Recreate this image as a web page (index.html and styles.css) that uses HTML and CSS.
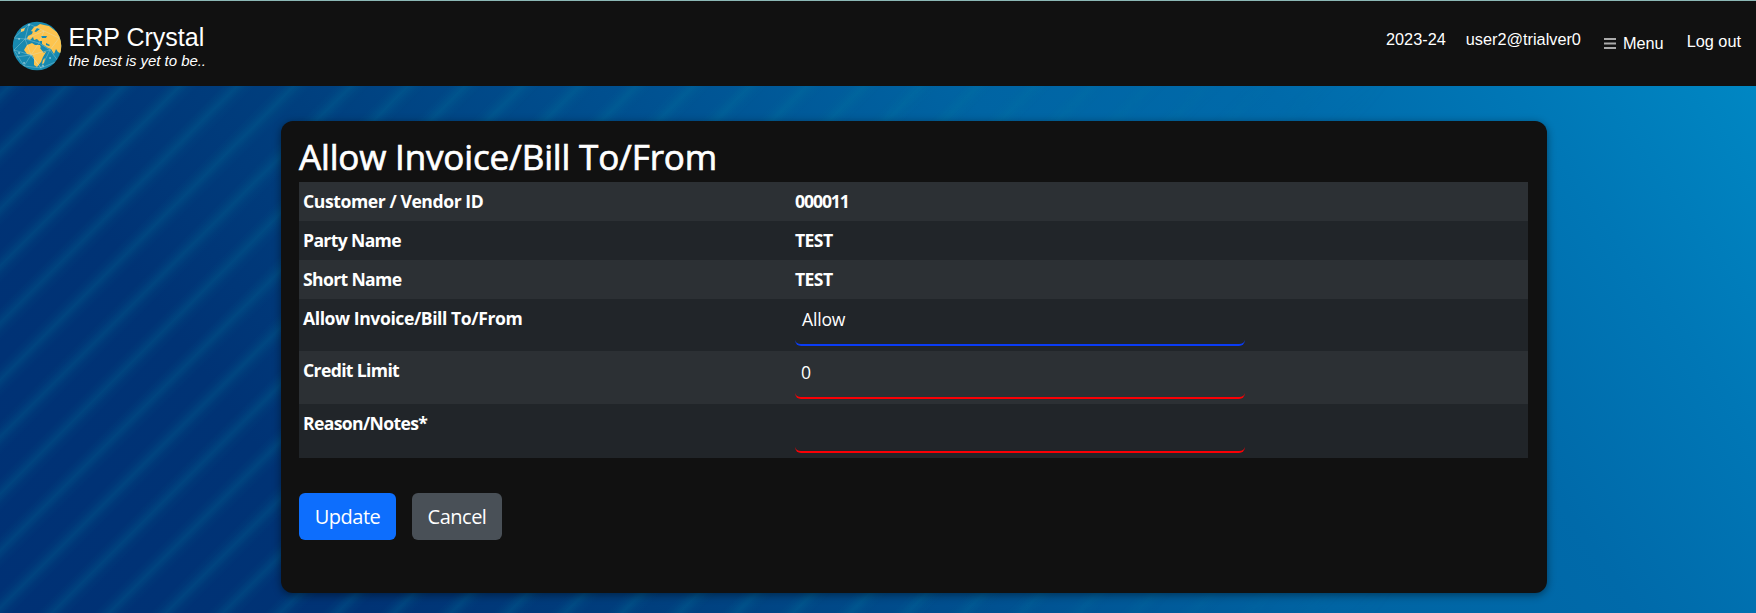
FILE: index.html
```html
<!DOCTYPE html>
<html lang="en">
<head>
<meta charset="utf-8">
<title>ERP Crystal</title>
<link rel="stylesheet" href="styles.css">
</head>
<body>
<header class="topbar">
  <div class="brand">
    <svg class="globe" viewBox="0 0 50 50">
      <defs><clipPath id="disc"><circle cx="25" cy="25" r="24.3"/></clipPath></defs>
      <circle cx="25" cy="25" r="24.3" fill="#1789b0"/>
      <g clip-path="url(#disc)">
        <path fill="#fdc44e" d="M25 5L28 3L32 4L37 5L50 15V33L46 31L44 28L42 33L39 28L36 27L33 25L30 23L30 20L27 20L25 18L22 19L21 16L18 19L15 18L16 15L20 13L21 10L24 11L28 8L25 7L22 11L19 10L22 6ZM9 8L13 7L12 10L9 11ZM15 24L20 22L23 24L28 24L30 29L34 31L31 36L29 41L25 46L22 44L22 37L20 34L15 33L12 29ZM31 39L33 37L32 42L30 43Z"/>
        <path fill="#1789b0" d="M29 15L35 15L34 17L30 17ZM28 27L29 26L33 31L32 32ZM34 22L38 24L37 25L34 24Z"/>
        <path fill="none" stroke="#d5ecec" stroke-width=".5" opacity=".6" d="M2 17L17 3L32 10L47 17L38 29L46 40L29 47L12 45L2 29L13 18L27 22L38 29L19 34L2 29M17 3L13 18L19 34L12 45M32 10L27 22L19 34L29 47L38 29M2 17L13 18L32 10M4 36L19 34M29 47L19 34"/>
        <path fill="none" stroke="#e8f6f8" stroke-width="1.3" stroke-linecap="round" d="M7 32h.1M12 42h.1M38 37h.1M17 4h.1M31 45h.1M7 18h.1"/>
      </g>
    </svg>
    <div class="brand-text">
      <div class="brand-name">ERP Crystal</div>
      <div class="tagline">the best is yet to be..</div>
    </div>
  </div>
  <nav class="nav">
    <span class="year">2023-24</span>
    <span class="user">user2@trialver0</span>
    <span class="menu"><svg class="bars" viewBox="0 0 12 11"><path d="M0 1H12M0 5.5H12M0 10H12" stroke="#aaa" stroke-width="1.8"/></svg>Menu</span>
    <span class="logout">Log out</span>
  </nav>
</header>
<main class="card">
  <h1 class="title">Allow Invoice/Bill To/From</h1>
  <div class="table">
    <div class="row"><b class="label wide">Customer / Vendor ID</b><b class="digits">000011</b></div>
    <div class="row"><b class="label">Party Name</b><b class="value">TEST</b></div>
    <div class="row"><b class="label">Short Name</b><b class="value">TEST</b></div>
    <div class="row tall-a"><b class="label wide">Allow Invoice/Bill To/From</b><div class="field">Allow</div></div>
    <div class="row tall-b"><b class="label">Credit Limit</b><div class="field number">0</div></div>
    <div class="row tall-c"><b class="label">Reason/Notes*</b><div class="field"></div></div>
  </div>
  <div class="actions">
    <button class="btn update">Update</button>
    <button class="btn cancel">Cancel</button>
  </div>
</main>
</body>
</html>
```
FILE: styles.css
```css
* { box-sizing: border-box; }
body {
  margin: 0;
  height: 613px;
  overflow: hidden;
  color: #fff;
  font-family: "Open Sans", "Noto Sans", sans-serif;
  background: linear-gradient(55deg, #003175 0%, #003375 17%, #003f7e 30%, #005090 45%, #0064a3 61%, #006aaa 75%, #0077b6 86%, #0088c4 98%);
  position: relative;
}
/* Diagonal light bands that fade out towards the right */
body::before {
  content: "";
  position: absolute;
  inset: 0;
  z-index: -1;
  background: repeating-linear-gradient(135deg, rgba(0,125,160,0) 0, rgba(0,125,160,0) 15px, rgba(0,125,160,.07) 20px, rgba(0,125,160,.24) 27px, rgba(0,125,160,.07) 34px, rgba(0,125,160,0) 40.3px);
  -webkit-mask-image: linear-gradient(90deg, #000 0, #000 50%, transparent 80%);
  mask-image: linear-gradient(90deg, #000 0, #000 50%, transparent 80%);
}
.topbar {
  height: 86px;
  background: #111;
  border-top: 1px solid #8cb8b6;
  display: flex;
  justify-content: space-between;
  font-family: "Liberation Sans", Arial, sans-serif;
}
.brand { display: flex; padding: 20px 0 0 12px; }
.globe { width: 50px; height: 50px; display: block; }
.brand-text { padding: 1px 0 0 6.5px; }
.brand-name { font-size: 25px; line-height: 30px; white-space: nowrap; }
.tagline { font-size: 15px; font-style: italic; line-height: 17px; letter-spacing: -.04px; white-space: nowrap; }
.nav { display: flex; font-size: 16.3px; line-height: 20px; padding: 28px 15px 0 0; }
.user { margin-left: 20px; }
.menu { margin: 4px 0 0 23px; display: flex; }
.bars { width: 12px; height: 11px; margin: 5px 7px 0 0; }
.logout { margin: 2px 0 0 23px; }
.card {
  width: 1266px;
  height: 472px;
  margin: 35px 0 0 281px;
  padding: 10px 19px 0 18px;
  background: #111;
  border-radius: 12px;
  box-shadow: 0 2px 8px rgba(0,0,0,.45);
}
.title {
  margin: 0;
  height: 51px;
  line-height: 52px;
  font-size: 35px;
  font-weight: 500;
  letter-spacing: -.16px;
  -webkit-text-stroke: .7px #fff;
  white-space: nowrap;
}
.row {
  display: grid;
  grid-template-columns: 492px 450px;
  height: 39px;
  padding-left: 4px;
  font-size: 17.6px;
  line-height: 39px;
  background: #212529;
  white-space: nowrap;
}
.row:nth-child(odd) { background: #2c3034; }
.row b { font-weight: 700; justify-self: start; }
.label { letter-spacing: -.65px; }
.label.wide { letter-spacing: -.43px; }
.value { letter-spacing: -.6px; }
.digits { letter-spacing: -1.1px; }
.field {
  height: 42px;
  padding-left: 7px;
  line-height: 31px;
  letter-spacing: -.2px;
  border-bottom: 2px solid #fa0005;
  border-radius: 6px;
}
.tall-a { height: 52px; }
.tall-b { height: 53px; }
.tall-c { height: 54px; }
.tall-a .field { margin-top: 5px; border-color: #0a3cf5; }
.tall-b .field { margin-top: 6px; }
.tall-c .field { margin-top: 7px; }
.field.number { padding-left: 6px; }
.actions { display: flex; gap: 16px; padding-top: 35px; }
.btn {
  height: 47px;
  padding: 0;
  border: 0;
  border-radius: 6px;
  color: #fff;
  font: 20px/47px "Open Sans", "Noto Sans", sans-serif;
  letter-spacing: -.5px;
}
.update { width: 97px; background: #0d6efd; }
.cancel { width: 90px; background: #495057; }
```
